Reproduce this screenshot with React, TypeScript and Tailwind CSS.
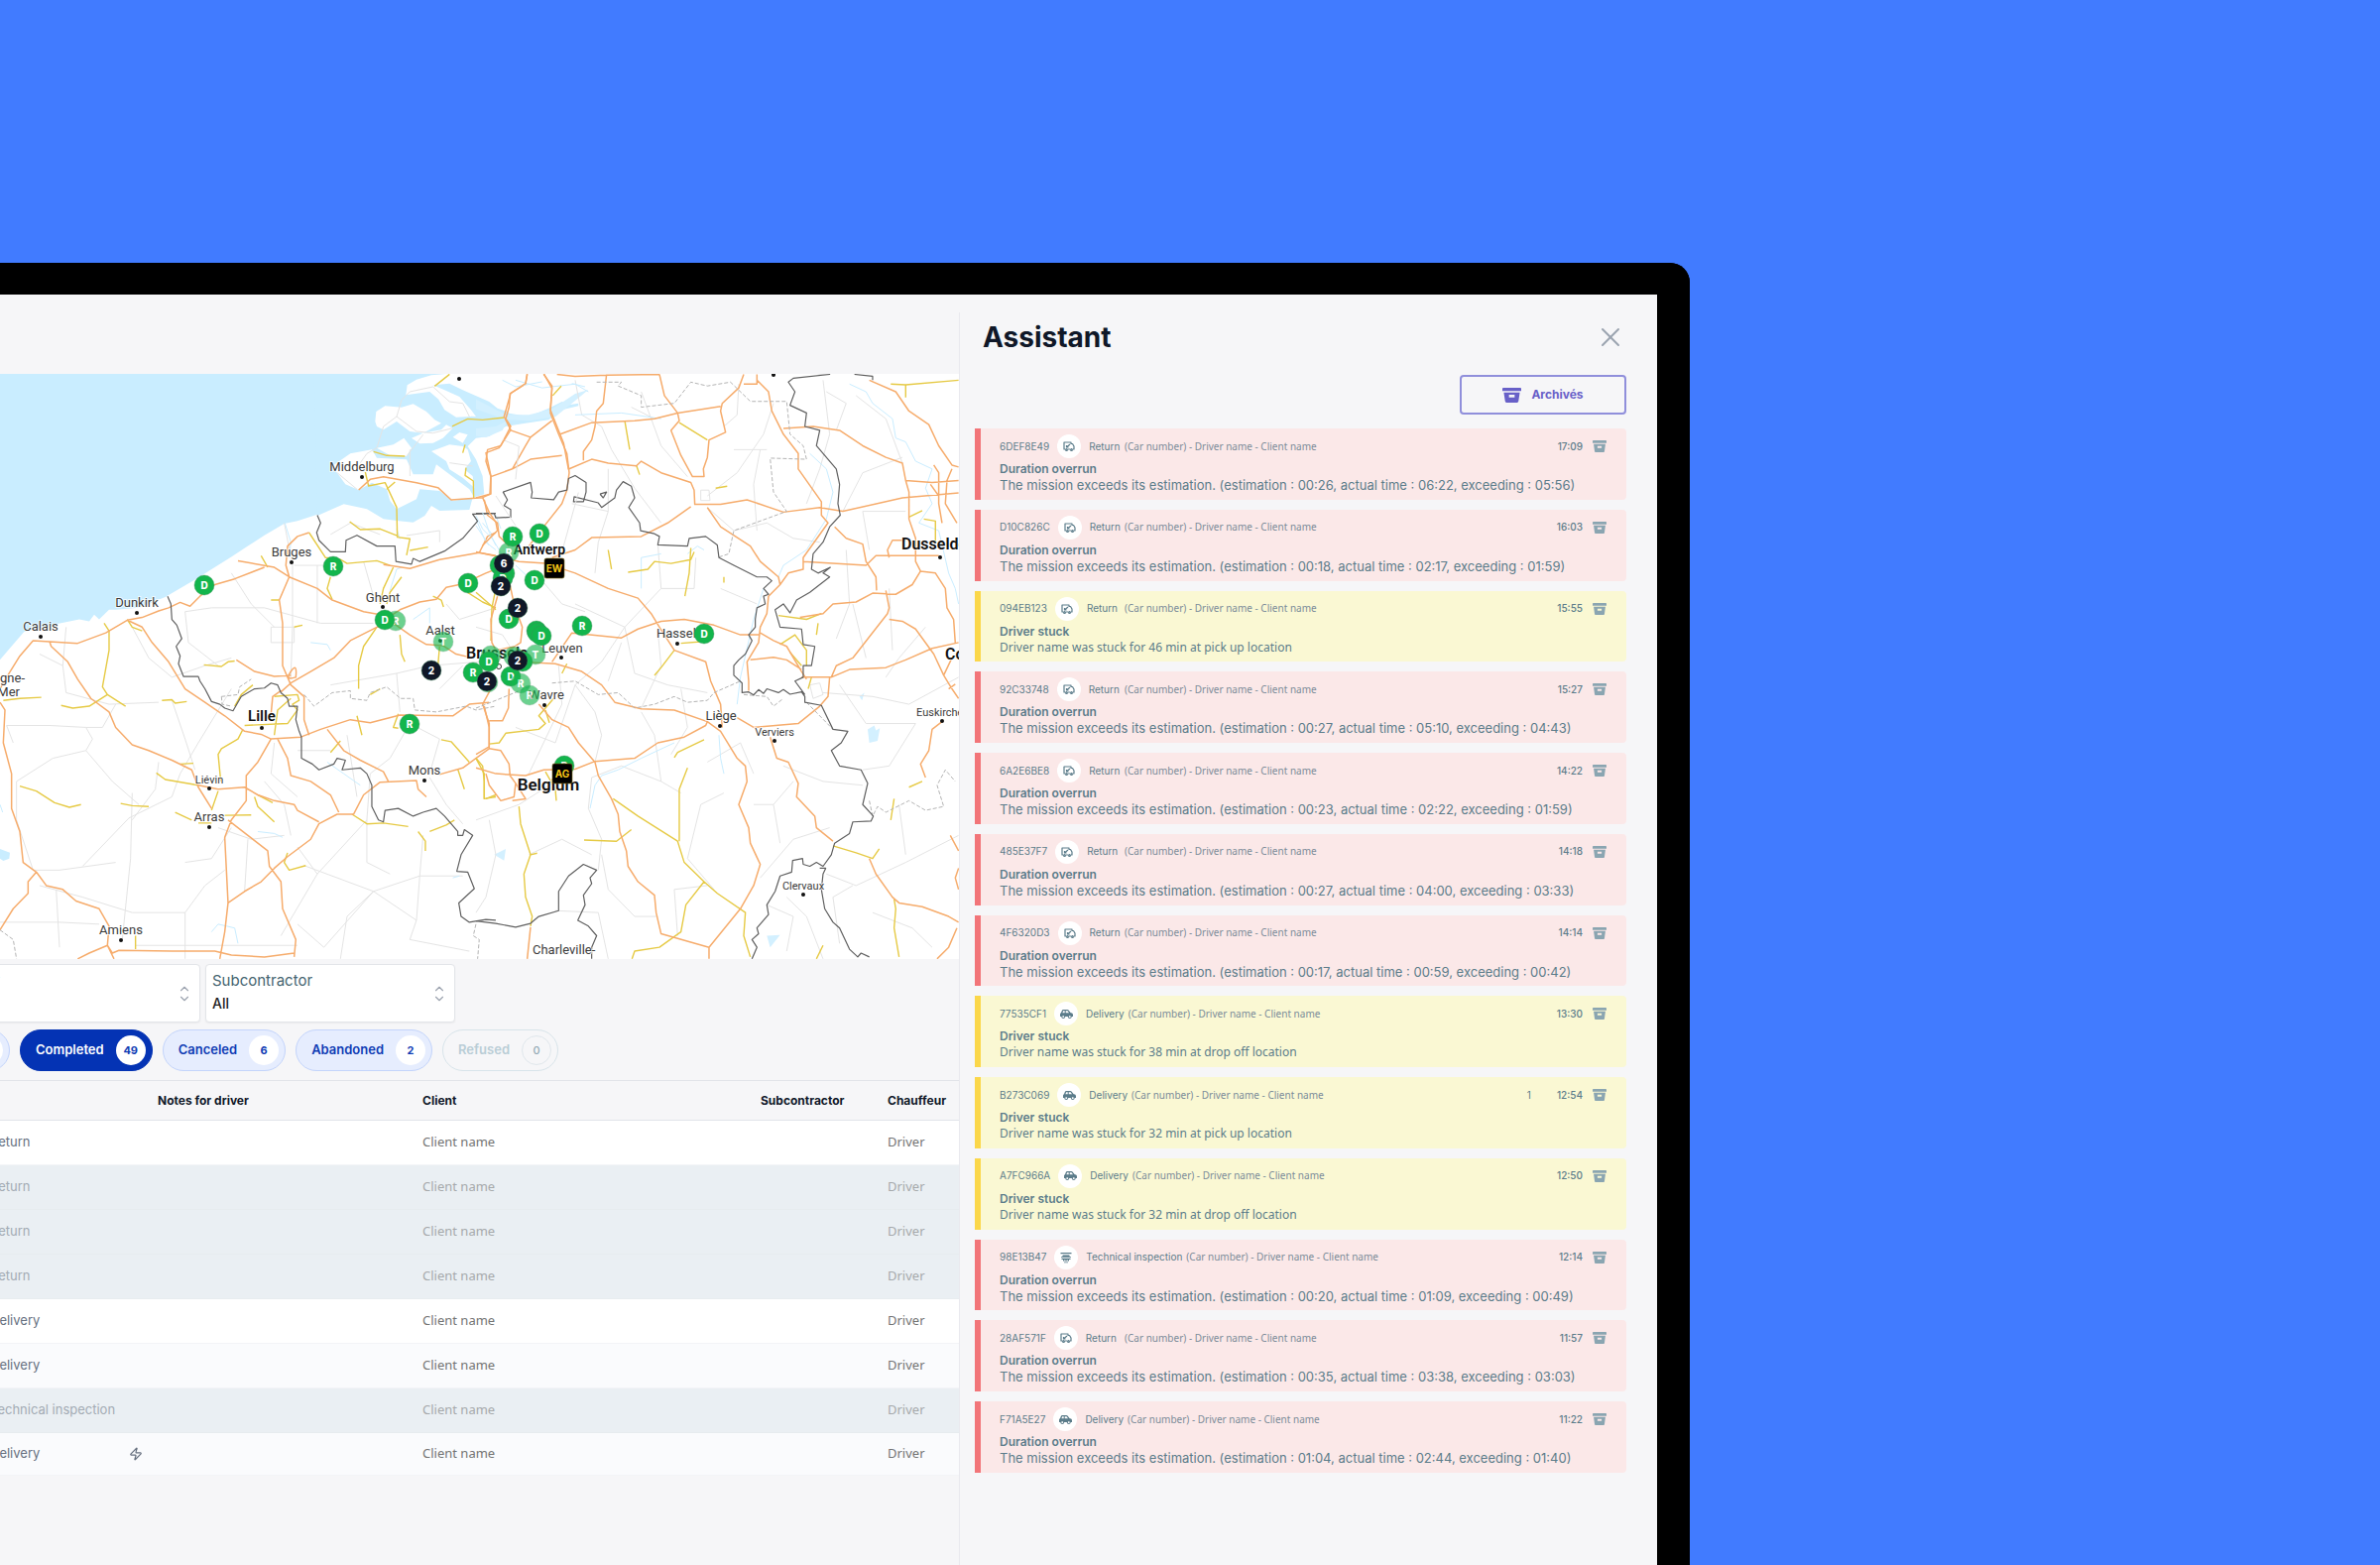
import { useState } from "react";
import clsx from "clsx";
import { FaCarSide } from "react-icons/fa";
import { LuChevronDown, LuChevronUp, LuX, LuZap } from "react-icons/lu";

type Mission = "Return" | "Delivery" | "Technical inspection";

type Alert = {
  id: string;
  mission: Mission;
  time: string;
  kind: "overrun" | "stuck";
  message: string;
  count?: number;
};

const overrun = (estimation: string, actual: string, exceeding: string) =>
  `The mission exceeds its estimation. (estimation : ${estimation}, actual time : ${actual}, exceeding : ${exceeding})`;

const alerts: Alert[] = [
  { id: "6DEF8E49", mission: "Return", time: "17:09", kind: "overrun", message: overrun("00:26", "06:22", "05:56") },
  { id: "D10C826C", mission: "Return", time: "16:03", kind: "overrun", message: overrun("00:18", "02:17", "01:59") },
  { id: "094EB123", mission: "Return", time: "15:55", kind: "stuck", message: "Driver name was stuck for 46 min at pick up location" },
  { id: "92C33748", mission: "Return", time: "15:27", kind: "overrun", message: overrun("00:27", "05:10", "04:43") },
  { id: "6A2E6BE8", mission: "Return", time: "14:22", kind: "overrun", message: overrun("00:23", "02:22", "01:59") },
  { id: "485E37F7", mission: "Return", time: "14:18", kind: "overrun", message: overrun("00:27", "04:00", "03:33") },
  { id: "4F6320D3", mission: "Return", time: "14:14", kind: "overrun", message: overrun("00:17", "00:59", "00:42") },
  { id: "77535CF1", mission: "Delivery", time: "13:30", kind: "stuck", message: "Driver name was stuck for 38 min at drop off location" },
  { id: "B273C069", mission: "Delivery", time: "12:54", kind: "stuck", message: "Driver name was stuck for 32 min at pick up location", count: 1 },
  { id: "A7FC966A", mission: "Delivery", time: "12:50", kind: "stuck", message: "Driver name was stuck for 32 min at drop off location" },
  { id: "98E13B47", mission: "Technical inspection", time: "12:14", kind: "overrun", message: overrun("00:20", "01:09", "00:49") },
  { id: "28AF571F", mission: "Return", time: "11:57", kind: "overrun", message: overrun("00:35", "03:38", "03:03") },
  { id: "F71A5E27", mission: "Delivery", time: "11:22", kind: "overrun", message: overrun("01:04", "02:44", "01:40") },
];

const rows: { mission: Mission; muted?: boolean; tinted?: boolean; express?: boolean }[] = [
  { mission: "Return" },
  { mission: "Return", muted: true },
  { mission: "Return", muted: true },
  { mission: "Return", muted: true },
  { mission: "Delivery" },
  { mission: "Delivery", tinted: true },
  { mission: "Technical inspection", muted: true },
  { mission: "Delivery", tinted: true, express: true },
];

const filters = [
  { label: "Completed", count: 49 },
  { label: "Canceled", count: 6 },
  { label: "Abandoned", count: 2 },
  { label: "Refused", count: 0 },
];

// x, baseline, name, size, weight, anchor
type City = [number, number, string, number, number, "start" | "middle" | "end"];
const cities: City[] = [
  [365, 98, "Middelburg", 13, 400, "middle"],
  [294, 184, "Bruges", 13, 400, "middle"],
  [138, 235, "Dunkirk", 13, 400, "middle"],
  [41, 259, "Calais", 13, 400, "middle"],
  [25, 311, "gne-", 13, 400, "end"],
  [20, 325, "Mer", 13, 400, "end"],
  [264, 350, "Lille", 15, 600, "middle"],
  [386, 230, "Ghent", 13, 400, "middle"],
  [444, 263, "Aalst", 13, 400, "middle"],
  [470, 287, "Brussels", 16, 600, "start"],
  [211, 413, "Liévin", 11, 400, "middle"],
  [211, 451, "Arras", 13, 400, "middle"],
  [122, 565, "Amiens", 13, 400, "middle"],
  [428, 404, "Mons", 13, 400, "middle"],
  [544, 182, "Antwerp", 14, 600, "middle"],
  [567, 281, "Leuven", 13, 400, "middle"],
  [662, 266, "Hasselt", 13, 400, "start"],
  [551, 328, "Wavre", 13, 400, "middle"],
  [727, 349, "Liège", 13, 400, "middle"],
  [781, 365, "Verviers", 11, 400, "middle"],
  [553, 420, "Belgium", 17, 600, "middle"],
  [810, 520, "Clervaux", 11, 400, "middle"],
  [537, 585, "Charleville-", 13, 400, "start"],
  [909, 177, "Dusseldorf", 16, 600, "start"],
  [953, 288, "Cologne", 16, 600, "start"],
  [924, 345, "Euskirchen", 11, 400, "start"],
];

const dots = [
  [365, 104], [294, 190], [138, 241], [41, 265], [264, 357], [386, 235], [444, 269], [211, 418],
  [211, 457], [122, 571], [428, 410], [566, 286], [683, 272], [549, 334], [726, 355], [781, 370],
  [810, 525], [948, 185], [950, 350], [463, 5], [780, 1],
];

type Pin = [number, number, string, ("green" | "faded" | "dark" | "tag")?];
const pins: Pin[] = [
  [206, 213, "D"],
  [336, 194, "R"],
  [399, 249, "R", "faded"],
  [388, 248, "D"],
  [413, 353, "R"],
  [447, 270, "T", "faded"],
  [435, 299, "2", "dark"],
  [472, 211, "D"],
  [513, 180, "R", "faded"],
  [504, 193, "S"],
  [509, 201, ""],
  [507, 206, "D"],
  [508, 191, "6", "dark"],
  [505, 214, "2", "dark"],
  [517, 164, "R"],
  [544, 161, "D"],
  [539, 208, "D"],
  [513, 247, "D"],
  [522, 236, "2", "dark"],
  [541, 259, ""],
  [542, 261, ""],
  [546, 264, "D"],
  [587, 254, "R"],
  [540, 283, "T", "faded"],
  [495, 284, "", "faded"],
  [477, 301, "R"],
  [493, 290, "D"],
  [492, 311, "", "faded"],
  [491, 310, "2", "dark"],
  [515, 305, "D"],
  [518, 285, "", "faded"],
  [527, 290, ""],
  [522, 289, "2", "dark"],
  [525, 312, "R", "faded"],
  [534, 324, "R", "faded"],
  [710, 262, "D"],
  [569, 395, "D"],
  [559, 196, "EW", "tag"],
  [567, 403, "AG", "tag"],
];

const west = {
  minor:
    "M860 430L885 540 885 700 880 830M50 1100L50 1200 100 1330 180 1330 350 1310M400 1130L395 1300 370 1510M250 1320L390 1195 520 1140 545 1080 600 1000 700 860M120 1370L250 1400 400 1440 560 1440 620 1370 680 1330M120 770L190 800 200 870 330 900 480 895M20 955L150 955 260 960 280 990 260 1020 340 1100 420 1160M400 700L450 780 520 830 620 800 700 780M640 650L800 650 970 690 1130 690M890 540L1000 540M660 1220L760 1250 860 1240M850 1500L960 1340 1110 1200 1120 1080M920 1318L1130 1385 1270 1345 1400 1345M1130 1385L980 1530 900 1470M1130 1385L1260 1460 1240 1510 1420 1540M1280 1240L1270 1345 1260 1460M1110 1200L1110 1310 1180 1340M1000 850L1200 820 1300 800 1450 790M1240 950L1180 1040 1120 1080M1240 950L1330 990 1300 1080M830 1000L820 1080 900 1140M0 1465L180 1465 300 1470M170 1380L180 1530M410 1525L900 1525M520 890L560 990 590 1070M1000 460L1060 430 1150 460M1350 640L1390 680 1500 650M820 700L890 700 890 740 820 740 820 700M1100 530L1130 620M50 1100L160 1040 260 1020M480 1050L470 1120 400 1200M700 1220L640 1300 560 1310M880 1240L860 1160 800 1100M1050 980L1080 1140M1300 1090L1350 1160 1400 1210M350 900L310 960 260 960M560 660L570 740 660 800M760 640L830 700M960 540L960 690M1200 820L1210 920M1330 860L1400 800M900 1020L1000 1020M700 560L760 640M560 660L640 650M200 700L190 800M40 1000L20 955M560 1440L560 1560M750 1250L740 1385M1130 1385L1050 1450 1030 1560M960 1340L900 1270",
  motorway:
    "M0 860L20 830 60 775 100 735 150 738 235 742 320 715 385 682 430 675 480 658 510 650 545 636 575 646 605 620 650 590 710 575 800 545M720 528L830 545 875 570 960 600 1005 630 1100 660 1180 672 1210 655 1270 635 1320 628 1350 597 1400 588 1470 560 1500 550M150 738L155 750 205 790 235 835 275 885 330 920 350 960 400 1005 450 1020 520 1045 580 1070 600 1115 640 1170M385 682L430 700 460 740 510 790 560 860 620 895 680 930 740 970 790 978 820 990 910 985 970 965 1060 940 1120 948 1210 928 1370 930 1420 900 1480 895M935 455L900 465 870 490 865 540 875 570 845 630 855 690 855 800 880 850 920 880 920 940 935 980M715 785L770 815 830 828 880 825M880 815Q900 790 895 830Q860 840 880 815M850 868L880 845 940 815 1010 780 1060 735 1140 700 1190 690 1240 720 1290 745 1340 748 1380 770 1420 778M820 990L780 1050 745 1085 745 1150 700 1200 680 1245 685 1330 690 1415 680 1490 665 1560M690 1200L750 1240 810 1280 815 1320 850 1360 855 1430 895 1510 890 1555M690 1415L740 1385 790 1360 830 1325 870 1295 940 1250 965 1210 1020 1185 1070 1185 1100 1135 1150 1102 1260 1098 1265 1120 1290 1140M840 990L870 1040 880 1085 940 1100 1000 1135 1025 1180M990 965L1040 1020 1090 1045 1160 1075 1175 1100M1330 1082L1400 1065 1480 1015 1480 960 1465 905M660 1120L740 1115 780 1135 830 1150 890 1160 900 1175 965 1205M0 895L15 915 10 1000 35 1080 35 1170 60 1230 70 1310 110 1335 140 1370 190 1380 230 1410 300 1430 330 1475 325 1525 345 1560M110 1335L85 1360 85 1390 40 1430 0 1485M235 1560L270 1545 325 1525 340 1545 360 1538 520 1540 650 1540 700 1550 800 1555 890 1545M1160 538L1240 548 1330 525 1450 507 1500 515M1450 507L1475 465 1500 455M820 925L825 880 850 865M600 1110L660 1120",
  trunk:
    "M1215 570L1180 610 1170 640M935 455L985 520 1030 525 1050 535 1140 528 1180 540M1000 570L990 600 1005 628M1190 545L1160 600 1150 640M1140 700L1100 750 1085 800 1085 860M1210 720L1215 770 1225 790M1330 750L1325 800M1415 610L1460 635 1500 650M1310 620L1335 630 1342 648M315 690L330 710 330 760 310 855 325 875 380 905M325 875L270 905 220 910 185 903M385 680L400 700 430 710M10 890L60 885 125 882M490 890L520 888 530 897 565 893M617 798L670 802 690 790 710 788M735 965L720 990 670 1015 660 1030 668 1100M660 1125L640 1175M473 1078L500 1095 600 1110M60 1112L110 1125 165 1155 210 1167 245 1160M365 1157L400 1163 450 1165M530 1180L580 1200M770 1140L780 1165 830 1205M780 1135L825 1155M1065 1185L1110 1210 1160 1208 1235 1217M1300 1230L1350 1213 1375 1200M1265 1230L1287 1255 1287 1280M870 1285L860 1310 875 1330 925 1318M1335 992L1365 997 1420 1050M1385 1068L1405 1120M1440 1040L1465 1080 1465 1145 1500 1140M410 1500L410 1535M1080 930L1095 980M1000 1025L1030 995M1205 925L1190 960 1205 962M830 880L900 875 905 890 885 900 900 915 870 950 740 955M830 980L840 915 880 885M640 1208L600 1208M545 1055L585 1053M790 515L810 545M820 630L845 630M890 700L915 695M680 1188L760 1187M710 905L730 875 765 850M1120 875L1150 860",
  border:
    "M507 620L517 640 520 680 535 695 550 730 533 750 545 775 540 795 555 828 600 828 605 840 620 860 640 893 665 900 680 910 705 917 730 880 770 860 800 858 820 845 840 850 850 870 870 885 875 905 900 905 895 940 905 970 912 985 912 1040 945 1055 965 1070 1010 1055 1020 1040 1045 1045 1035 1070 1090 1065 1110 1080 1125 1110 1125 1165 1145 1200 1160 1205 1165 1175 1205 1170 1250 1190 1280 1180 1320 1170 1345 1190 1385 1230 1385 1240 1400 1240 1405 1225 1430 1240 1395 1290 1382 1333 1415 1335 1435 1378 1388 1415 1395 1450 1420 1465 1470 1458 1500 1460M960 410L970 430 958 455 965 475 1000 505 1045 505 1047 475 1080 462 1140 490 1195 490 1198 530 1245 537 1250 522 1270 530 1345 503 1400 470 1445 425 1430 407 1500 405",
  region:
    "M670 880L672 900 700 905M670 880L720 875 725 855 760 835M920 875L950 905 1005 870 1060 865 1060 885 1110 890 1120 870 1170 855 1205 880 1210 885 1250 885 1255 915 1320 920 1410 905 1440 915 1500 905M0 1485L40 1510 50 1560M1440 1470L1432 1500 1450 1510 1445 1560",
  water:
    "M860 425L880 480 875 520M1180 605L1200 550 1215 545M940 740L990 745 1000 760M1250 680L1300 650 1300 690M990 1050L1040 1080 1090 1110M780 1230L830 1235 855 1245M640 1490L660 1470 710 1480 720 1520M0 1160L8 1180M1370 1350L1390 1345M1440 420L1470 480 1500 500M1460 430L1490 460",
};

const east = {
  minor:
    "M300 60L320 150 380 180 410 240M400 290L400 400 370 480 360 560M290 380L400 400M500 90L560 230 640 310M680 345L705 345 708 372 680 372 680 345M795 70L790 150 750 180M700 360L790 300 870 200 900 120M1000 380L1040 290 1070 200 1050 60M1110 400L1170 300 1290 260M1090 190L1120 120 1060 90M450 700L380 790 300 850 240 1000M450 700L560 600 550 480M560 600L660 600 665 520M300 640L450 700 480 820 580 850 700 870M300 850L360 920 380 980 360 1050M240 1000L180 980 120 960M500 920L540 980 560 1100 620 1130M700 1050L800 1000 840 1080M840 1160L900 1160 920 1260M560 1100L440 1060 350 1090 340 1170 380 1250 370 1330M160 1290L260 1250 350 1290M380 1290L400 1380 480 1450 550 1450M0 1200L130 1160 240 1100M720 1380L640 1300 680 1160 750 1130M860 1350L960 1250 1070 1220M1060 1340L1150 1370 1300 1310 1460 1240M1100 1520L1080 1400 1140 1370M940 1400L1000 1450 1050 1560M1090 730L1130 640 1120 500M1050 870L1200 880 1310 900 1460 830M1100 850L1180 950 1330 950 1250 1060 1170 1070M1360 700L1280 780 1240 830M1140 640L1180 780M1010 850L1040 845 1050 875 1020 885 1010 850M1250 600L1260 760M880 430L960 470 1040 480M1170 400L1190 500M780 240L880 240M470 130L540 160M250 800L260 900 160 1080M0 700L80 720 110 760M180 560L260 640 330 660M60 1290L30 1400 0 1440M240 1435L370 1440 400 1560M610 1500L600 1380 700 1370M880 1420L960 1450 940 1540M1200 1440L1320 1480 1380 1530M1280 1160L1300 1290M930 1060L1050 1100 1170 1110M620 860L640 960 590 1030M860 240L840 330 850 450M550 710L560 800 500 910M740 600L850 640M700 390L780 450 880 430M1300 400L1170 400M560 430L480 340 410 240M1150 100L1240 160 1290 275M40 1200L60 1290M440 740L400 840M960 1100L900 1160",
  motorway:
    "M155 45L150 70 103 95 100 130 90 160 105 180 75 230 35 240 30 270 45 310 45 355 0 365M25 370L35 410 65 430 70 465 100 490M105 190L165 208 230 165M45 310L110 290 165 265 260 255M165 208L150 230 110 290M205 45L230 75 225 145 250 200 275 250 282 300 275 345 260 380 200 445 160 490M395 45L385 120 365 140 360 180 350 215 325 245 325 268M245 45L300 50 395 47 555 45M255 200L350 170 480 165 540 160 610 145 740 128M282 290L350 265 400 275 485 282 500 270 560 300 650 325 660 345 662 382 740 382 820 370 930 402 1040 390 1110 400 1290 365 1460 352M555 45L570 100 610 145 615 165 590 190 620 255 655 310 690 310 688 290 700 260 705 215 755 195 740 140 745 120 795 80 810 45M810 70L850 70 850 45M850 60L885 90 895 140 930 200 975 250 975 290 1045 375 1045 410 1065 430 990 520 990 550 945 560 920 590 885 620 880 665 860 700 855 740 820 790 825 840 825 865M930 185L1020 180 1100 190 1170 230 1240 260 1290 275 1300 320 1310 350 1310 420 1330 470 1330 530 1345 555 1320 590 1270 615 1200 612 1150 635 1080 640 1050 665 980 675M1190 60L1270 90 1310 140 1370 175 1400 230 1440 280 1460 285M1300 320L1380 325 1460 320M1385 280L1400 300 1400 380 1410 430M1440 290L1425 320 1420 380 1455 430M1375 330L1400 360M990 530L1180 540 1210 515 1330 515 1400 515M1250 520L1245 500 1260 475 1300 475M1085 440L1120 470 1170 485 1180 530 1210 570 1212 605M1345 555L1390 560 1420 600 1425 650 1445 680 1450 740M1240 605L1250 650 1245 665 1195 720 1140 780 1090 800 1075 830 985 830M1250 680L1290 685 1330 705 1385 770 1415 825 1440 860 1460 885M1415 825L1440 780M1430 860L1450 848M1075 830L1130 810 1240 805 1300 785 1380 755 1460 740M830 785L900 778 940 785 985 810M860 715L900 735 940 750 985 815 1000 835M230 520L300 500 350 468 500 465 580 430 650 388M700 390L740 440 830 490 860 530 915 570 920 590M0 505L80 520 130 530 210 535 300 560 400 600 490 625 530 665 555 700 600 760 695 790 710 840 740 900 745 960M230 790L290 715 345 720 440 728 490 705 560 685 630 680 720 695 800 720 860 720M65 560L100 580 115 640 140 700 135 740 100 760M65 620L45 680 48 740 60 760 120 750M130 790L240 795 320 815 380 850 420 895 500 912 600 915 700 945 740 970 790 1040 815 1060 820 1100 795 1160 825 1220 830 1260 860 1315 840 1370 800 1430 705 1530 705 1560M190 900L210 920 230 940 280 960 310 1000 360 1050 370 1085 410 1145 430 1185 435 1230 455 1280 460 1320 490 1360 540 1395 545 1440 560 1495 705 1530M0 1065L60 1080 150 1085 205 1070 300 1068 360 1048 480 1040 550 1000 630 985 695 955 700 945M45 860L20 900 40 950 40 1010 0 1030M40 1015L75 1020 100 1055 103 1085 120 1105 115 1140 75 1150 40 1110 30 1080M40 943L80 943 98 910 100 860M120 1105L150 1145 110 1150M790 935L840 960 975 950 1040 905 1065 880 1070 830M890 985L910 1040 945 1050 975 1105 970 1140 1025 1190 1030 1220 1080 1255M165 1478L155 1560M1190 1300L1210 1340 1260 1400 1280 1415 1350 1425 1430 1450 1460 1465M1455 1480L1430 1530 1395 1560M1410 945L1380 965 1370 1020 1345 1055 1360 1090M1435 1240L1460 1280M1460 1325L1450 1350 1460 1380",
  trunk:
    "M232 100L258 75M450 165L465 240M615 170L700 215M485 280L495 305M400 500L410 550M460 558L520 550 540 530 590 535 650 525 660 505M650 495L645 560 632 620M725 340L760 335M620 742L690 737M600 760L560 805 540 825M0 610L60 655M120 755L160 790M260 820L275 795M235 885L190 930 210 950 190 965 90 975 70 1000 40 1003M210 915L222 948M600 1038L610 1025 690 992M0 1040L20 1060 25 1100 25 1145M60 1135L30 1145M210 1075L240 1120 243 1150M130 1165L135 1210 165 1290 145 1340 150 1400 170 1450 165 1475M640 1065L615 1120 615 1255M327 1252L425 1255 470 1225M415 1145L490 1190 610 1255 630 1310 690 1360 635 1420 620 1490 555 1530 480 1540 472 1560M690 1360L730 1390 815 1440 810 1500 830 1555M915 670L1000 680 1045 665M920 745L965 720 1000 760 1000 800M1030 720L1035 690M1005 860L1015 830M950 765L985 800M1255 70L1300 72 1460 60M1300 105L1300 70M1355 420L1390 425 1390 480M1310 415L1350 398M1080 1267L1150 1285 1200 1300 1220 1275M1265 1145L1255 1200M1265 1405L1270 1430 1265 1480 1280 1555M1310 1115L1350 1100M1030 1560L1050 1525M750 570L750 585M165 1290L185 1286M45 735L48 650 60 600",
  border:
    "M0 405L55 405 60 417 105 415 105 395 85 385 95 370 82 350 165 325 170 350 167 365 235 370 250 350 275 345 280 315 300 307 333 325 333 350 325 375 295 375 297 362 370 378 380 390 420 365 425 345 445 323 470 335 480 365 462 390 495 430 498 450 540 458 555 465 550 487 640 490 645 470 695 465 730 487 735 520 780 540 850 570 880 570 895 580 870 600 885 615 870 620 875 640 850 650 845 680 845 700 825 720 835 735 815 770 795 785 780 800 780 825 805 845 805 870 825 868 840 876 855 862 870 872 880 860 915 870 930 862 950 874 985 868 995 880 995 895 1045 903 1080 965 1125 970 1105 1000 1075 1020 1100 1060 1165 1070 1185 1105 1170 1160 1202 1190 1195 1203 1140 1205 1130 1235 1085 1260 1075 1290 1050 1320 1030 1310 1010 1320 990 1315 988 1300 958 1305 955 1335 920 1345 905 1385 880 1420 885 1445 850 1480 855 1495 835 1510 850 1530 835 1560M1040 1325L1058 1325 1050 1340 1045 1380 1055 1430 1080 1465 1100 1480 1130 1535 1155 1555 1165 1545 1190 1555M1030 42L1070 45 960 55 945 65 965 90 950 125 1000 145 995 180 1040 190 1030 230 1090 290 1100 330 1095 380 1102 410 1070 440 1050 480 1020 510 1015 550 1035 560 1072 545 1050 560 1070 570 1010 610 970 630 950 663 930 640 905 655 920 700 985 705 990 745 1025 750 1015 800 990 800 990 830 965 840 995 875M1145 45L1200 50 1200 60M375 355L395 350 385 365 375 355M0 1462L60 1468 120 1478 165 1468 190 1450 250 1435 250 1385 280 1345 325 1315 365 1330 345 1350 350 1365 325 1395 330 1420 308 1460 340 1475 365 1500 350 1530 350 1560",
  region:
    "M0 910L60 890 160 855M230 845L300 840 370 875 430 870 480 910 540 900 600 880 640 895 700 890 720 870 800 840M810 875L880 880 900 905 930 885M365 65L440 65 430 75 500 100 500 130 600 120 650 65 700 75 770 65 830 115 940 115 950 200 990 230 1000 265 890 262 900 350 940 400 780 450 765 510 730 520M1190 1150L1200 1190 1215 1165 1240 1180 1310 1150 1360 1175 1415 1165 1395 1110 1420 1070 1450 1100M1000 895L1080 965",
  water:
    "M1010 250L1060 290 1080 350 1060 420 1000 500 930 540 915 570M870 600L840 680 800 830 790 900M1300 220L1330 270 1380 290 1360 340 1380 380 1340 430 1400 450 1430 560 1450 600 1460 640M500 600L500 520 560 510M380 1085L430 1070 500 1040 600 1000M1130 70L1180 90 1200 120 1260 160 1270 210 1300 220M120 60L200 80 300 70 340 90M300 150L440 145 560 160M345 1170L360 1110 380 1085M735 980L740 1040 750 1080M640 510L670 490 690 500M60 410L75 445M120 540L170 580",
};

const delta = {
  sea: "M-10 20H400L440 45 500 75 545 105 580 140 640 150 700 125 740 105 760 115 790 110V118L740 130 700 160 620 172 570 180 520 210 480 215 455 240 480 280 500 330 505 385 470 395 460 432 370 435 345 420 325 450 290 470 240 465 200 460 150 430 80 415 0 450Z",
  islands:
    "M268 85L272 55 300 38 345 25 400 20H700L700 80 640 115 590 140 545 125 520 105 440 70 400 50 350 55 385 70 430 90 465 130 480 150 440 148 375 105 340 75 300 80ZM365 95L430 110 465 150 420 152 385 130ZM175 165L178 135 205 118 255 122 290 112 330 135 355 160 375 170 320 200 280 195 240 165 200 190 180 180ZM285 215L320 200 375 190 390 175 410 185 380 215 350 230 310 232ZM410 212L430 198 455 205 440 230ZM345 255L400 235 440 240 455 250 465 285 445 310 470 330 475 365 440 335 400 310 390 285ZM180 245L230 235 262 215 285 245 270 270 220 268ZM45 300L100 262 165 250 180 275 270 280 290 325 350 325 360 295 420 340 460 370 475 395 410 405 370 375 310 370 300 400 240 430 220 405 210 370 165 350 125 372 85 355Z",
  minor: "M130 290L150 262 180 245 200 180 240 150 255 100 280 75 350 60 400 105 440 110 460 150M240 150L300 195 350 200 410 185M270 270L320 205M280 330V250M400 290L470 300M60 320L120 370M540 390L600 480M600 340L610 240 560 220M740 560L790 380M270 510L370 495 370 530",
  motorway:
    "M125 372L160 340 200 332 300 350 365 365 405 402 500 395 522 385 525 330 510 260 550 245 585 190 565 150 585 80 630 50 635 20M500 395L520 440 540 470 545 495 500 540M685 20L710 65 705 130 745 230 760 310",
  trunk: "M145 318L155 360 205 350 240 425 242 515 280 520 270 570M98 468L130 492 190 490 245 512M280 555L335 545M210 370L235 348M170 256L210 268 265 270M355 58L400 22M408 180L455 157 500 160 565 153M440 260L447 235M450 305L447 328 472 345 473 398",
  water: "M500 440L520 500 540 540M480 450L500 490 530 520 560 570M480 480L520 540M560 40L600 60 680 45M240 490L250 520M770 50L810 60",
};

type Layer = { minor: string; motorway: string; trunk: string; water: string; border?: string; region?: string };

function Roads({ layer, transform }: { layer: Layer; transform: string }) {
  return (
    <g transform={transform} className="fill-none" strokeLinejoin="round">
      <path d={layer.minor} stroke="#e4e4e4" vectorEffect="non-scaling-stroke" />
      <path d={layer.water} stroke="#c9edff" vectorEffect="non-scaling-stroke" />
      <path d={layer.trunk} stroke="#e6ca45" strokeWidth="1.4" vectorEffect="non-scaling-stroke" />
      <path d={layer.motorway} stroke="#f6ac6c" strokeWidth="1.5" vectorEffect="non-scaling-stroke" />
      {layer.region && (
        <path d={layer.region} stroke="#b4b4b4" strokeDasharray="4 2" vectorEffect="non-scaling-stroke" />
      )}
      {layer.border && <path d={layer.border} stroke="#606060" strokeWidth="1.2" vectorEffect="non-scaling-stroke" />}
    </g>
  );
}

function MapPin({ pin }: { pin: Pin }) {
  const [x, y, label, tone = "green"] = pin;
  if (tone === "tag") {
    return (
      <g>
        <rect x={x - 10} y={y - 10} width="20" height="20" rx="2" fill="#000" stroke="#7a6410" strokeWidth="0.6" />
        <text x={x} y={y + 4} textAnchor="middle" fontSize="10" fontWeight="700" fill="#f5c518">
          {label}
        </text>
      </g>
    );
  }
  return (
    <g opacity={tone === "faded" ? 0.62 : 1}>
      <circle cx={x} cy={y} r="10" fill={tone === "dark" ? "#101828" : "#13b54c"} stroke="#3f8a5b" strokeWidth="0.4" />
      <text x={x} y={y + 4} textAnchor="middle" fontSize="10" fontWeight="800" fill="#fff">
        {label}
      </text>
    </g>
  );
}

function FleetMap() {
  const westTransform = "translate(0 -17) scale(0.3333 0.389)";
  const eastTransform = "translate(480 -17) scale(0.3333 0.389)";
  const deltaTransform = "translate(320 -7) scale(0.3333)";
  return (
    <svg
      viewBox="0 0 967 590"
      preserveAspectRatio="xMinYMin slice"
      className="block h-[590px] w-full bg-white"
      role="img"
      aria-label="Fleet map"
    >
      <path
        fill="#c9edff"
        transform={westTransform}
        d="M0 42H1240V60L1000 300 960 408 900 425 860 432 800 462 750 490 700 518 640 550 600 572 550 597 500 622 420 650 350 655 330 655 300 680 285 668 270 685 240 680 170 692 73 712 45 740 0 785ZM0 1275L30 1285 28 1300 10 1306 0 1300Z"
      />
      <g transform={deltaTransform}>
        <path d={delta.sea} fill="#c9edff" />
        <path d={delta.islands} fill="#fff" />
      </g>
      <path
        transform={eastTransform}
        fill="#d3f0ff"
        d="M0 110L90 150 160 150 230 135 300 95 340 85 290 120 240 155 160 165 90 162 0 135ZM0 185L60 180 95 165 80 190 30 208 0 205ZM1185 965L1205 955 1210 968 1222 962 1215 995 1190 1000ZM55 1290L90 1275 85 1305ZM880 1500L920 1498 890 1530ZM1160 880L1175 870 1168 890Z"
      />
      <Roads layer={west} transform={westTransform} />
      <Roads layer={east} transform={eastTransform} />
      <Roads layer={delta} transform={deltaTransform} />
      {dots.map(([x, y]) => (
        <circle key={`${x}-${y}`} cx={x} cy={y} r="2" fill="#111" />
      ))}
      <circle cx="503" cy="295" r="2.500" fill="#fff" stroke="#333" />
      <g className="font-[Roboto,sans-serif]" stroke="#fff" strokeWidth="2" strokeOpacity="0.7" paintOrder="stroke">
        {cities.map(([x, y, name, size, weight, anchor]) => (
          <text key={name} x={x} y={y} fontSize={size} fontWeight={weight} textAnchor={anchor} fill={weight === 600 ? "#111" : "#3c3c3c"}>
            {name}
          </text>
        ))}
      </g>
      {pins.map((pin) => (
        <MapPin key={`${pin[0]}-${pin[1]}`} pin={pin} />
      ))}
    </svg>
  );
}

function ArchiveIcon({ className }: { className?: string }) {
  return (
    <svg viewBox="0 0 20 16" preserveAspectRatio="none" fill="currentColor" className={className} aria-hidden="true">
      <path d="M0 .8C0 .3.4 0 .8 0h18.400c.4 0 .8.3.8.8v2.700H0z" />
      <path fillRule="evenodd" d="M1.500 5h17l-1.400 9.500c-.1.900-.7 1.500-1.600 1.500h-11c-.9 0-1.500-.6-1.600-1.500zM7 7.500v2.800h6V7.500z" />
    </svg>
  );
}

function MissionIcon({ mission }: { mission: Mission }) {
  if (mission === "Delivery") return <FaCarSide className="size-[13px]" />;
  if (mission === "Return") {
    return (
      <svg viewBox="0 0 24 20" className="h-2.5 w-3" fill="none" stroke="currentColor" strokeWidth="2.400" strokeLinejoin="round">
        <path d="M4 16H2V2h14v3h3l3 5v6h-2M10 16h4M7 12l7-6M7 8v4h4" />
        <circle cx="7" cy="17" r="1.800" />
        <circle cx="17" cy="17" r="1.800" />
      </svg>
    );
  }
  return (
    <svg viewBox="0 0 24 24" className="size-3" fill="currentColor">
      <path d="M1 2h22v2.500H1zM6 7h12l2 3h2v1.500H2V10h2zM3 13.500h18V16h-3v3h-3v-3h-1.500v3h-3v-3H9v3H6v-3H3zM8 21h8v1.500H8z" />
    </svg>
  );
}

function AlertCard({ alert }: { alert: Alert }) {
  const stuck = alert.kind === "stuck";
  return (
    <li
      className={clsx(
        "rounded-r border-l-[6px] pt-1.5 pr-5 pl-[19px] text-[#5b7c8a]",
        stuck ? "border-[#fbd74a] bg-[#faf8d3]" : "border-[#f27579] bg-[#fbe8e8]",
      )}
    >
      <div className="flex h-6 items-center text-[10px]">
        <div className="flex min-w-[126px] items-center pr-1">
          <span>{alert.id}</span>
          <span className="mx-2 flex size-6 shrink-0 items-center justify-center rounded-full bg-white">
            <MissionIcon mission={alert.mission} />
          </span>
          <span>{alert.mission}</span>
        </div>
        <span className="font-['Noto_Sans',sans-serif] text-[10px] text-[#7b8c99]">
          (Car number) - Driver name - Client name
        </span>
        {alert.count && <span className="ml-auto pr-[26px]">{alert.count}</span>}
        <time className={clsx("font-medium", !alert.count && "ml-auto")}>{alert.time}</time>
        <button type="button" aria-label={`Archive ${alert.id}`} className="ml-2.5 text-[#8aa5b1]">
          <ArchiveIcon className="block h-3 w-3.5" />
        </button>
      </div>
      <h2 className="mt-[3px] text-xs leading-4 font-semibold">{stuck ? "Driver stuck" : "Duration overrun"}</h2>
      <p className={clsx("leading-4", stuck ? "font-['Noto_Sans',sans-serif] text-xs" : "text-[13px]")}>{alert.message}</p>
    </li>
  );
}

function Assistant() {
  return (
    <aside className="w-[704px] shrink-0 pt-[18px]">
      <div className="h-full border-l border-[#e9e9ee] pt-1 pr-[31px] pl-[15px]">
        <div className="flex h-[42px] items-center justify-between pl-2">
          <h1 className="text-[28px] font-bold text-[#101828]">Assistant</h1>
          <button type="button" aria-label="Close" className="text-[#9aa3af]">
            <LuX className="size-8" strokeWidth={1.5} />
          </button>
        </div>
        <div className="mt-[17px] flex justify-end">
          <button
            type="button"
            className="flex h-10 w-[168px] items-center justify-center gap-2.5 rounded border-2 border-[#908fdb] text-xs font-bold text-[#6860c8]"
          >
            <ArchiveIcon className="h-[15px] w-[19px]" />
            Archivés
          </button>
        </div>
        <ul className="mt-3.5 grid h-[1053px] auto-rows-fr gap-2.5">
          {alerts.map((alert) => (
            <AlertCard key={alert.id} alert={alert} />
          ))}
        </ul>
      </div>
    </aside>
  );
}

function SelectField({ id, label, value, className }: { id: string; label: string; value: string; className?: string }) {
  return (
    <div className={clsx("relative h-[59px] w-[252px] rounded border border-[#e3e5e9] bg-white px-1.5 shadow-xs", className)}>
      <label htmlFor={id} className="block pt-1.5 text-[15px] leading-5 text-[#456470]">
        {label}
      </label>
      <select id={id} className="block w-full appearance-none pt-[3px] text-sm font-medium text-[#222]">
        <option>{value}</option>
      </select>
      <span className="pointer-events-none absolute inset-y-0 right-2 flex flex-col items-center justify-center text-[#9ca3af]">
        <LuChevronUp className="-mb-1 size-3.5" />
        <LuChevronDown className="size-3.5" />
      </span>
    </div>
  );
}

function StatusPill({ label, count, active, onClick }: { label: string; count: number; active: boolean; onClick: () => void }) {
  const empty = count === 0;
  return (
    <button
      type="button"
      disabled={empty}
      onClick={onClick}
      className={clsx(
        "flex h-[42px] shrink-0 items-center gap-3 rounded-full border pr-1.5 pl-[15px] text-[13px] font-semibold",
        active && "border-[#0433b4] bg-[#0433b4] text-white",
        !active && !empty && "border-[#c3d4fb] bg-[#e6edfe] text-[#0f3cb4]",
        empty && "border-[#d8e4ea] text-[#b9cdd6]",
      )}
    >
      {label}
      <span
        className={clsx(
          "flex size-[30px] items-center justify-center rounded-full text-[11px]",
          empty ? "border border-[#e0e7ec] font-medium text-[#92a9b5]" : "bg-white font-bold text-[#0f3cb4]",
        )}
      >
        {count}
      </span>
    </button>
  );
}

function MissionTable() {
  return (
    <table className="-ml-2.5 w-[977px] table-fixed border-collapse text-left text-[13px]">
      <colgroup>
        <col className="w-[169px]" />
        <col className="w-[267px]" />
        <col className="w-[341px]" />
        <col className="w-[128px]" />
        <col />
      </colgroup>
      <thead>
        <tr className="h-10 border-y border-[#e1e4e9] text-xs font-bold text-[#101828]">
          <th>
            <span className="sr-only">Mission</span>
          </th>
          <th>Notes for driver</th>
          <th>Client</th>
          <th>Subcontractor</th>
          <th>Chauffeur</th>
        </tr>
      </thead>
      <tbody>
        {rows.map((row, i) => (
          <tr
            key={i}
            className={clsx(
              "h-[45px] border-b last:h-[43px]",
              row.muted && "border-[#e7ecef] bg-[#eaeff3] text-[#a3abb3]",
              !row.muted && "border-[#f3f4f7] text-[#66707f]",
              !row.muted && (row.tinted ? "bg-[#fafbfd]" : "bg-white"),
            )}
          >
            <td colSpan={row.express ? 1 : 2}>
              <span className="flex items-center">
                <span className={clsx(row.express && "w-[140px]")}>{row.mission}</span>
                {row.express && <LuZap className="size-3.5 shrink-0" />}
              </span>
            </td>
            {row.express && <td />}
            <td className={clsx("font-['Noto_Sans',sans-serif]", row.muted ? "text-[#a6a9ab]" : "text-[#747474]")}>Client name</td>
            <td />
            <td className={clsx("font-['Noto_Sans',sans-serif]", row.muted ? "text-[#a6a9ab]" : "text-[#747474]")}>Driver</td>
          </tr>
        ))}
      </tbody>
    </table>
  );
}

export default function App() {
  const [status, setStatus] = useState("Completed");

  return (
    <main className="flex min-h-screen flex-col bg-[#417bff] pt-[265px] font-[Inter,sans-serif]">
      <div className="flex w-[71%] grow rounded-tr-[20px] border-t-[32px] border-r-[33px] border-black bg-[#f6f6f8]">
        <section className="min-w-0 flex-1 overflow-hidden pt-20">
          <FleetMap />
          <div className="mt-[5px] -ml-[50px] flex gap-[5px]">
            <SelectField id="driver" label="Driver" value="All" />
            <SelectField id="subcontractor" label="Subcontractor" value="All" />
          </div>
          <div className="mt-[7px] mb-[9px] -ml-[130px] flex gap-2.5">
            <span className="flex h-[42px] w-[140px] shrink-0 items-center justify-end rounded-full border border-[#c3d4fb] bg-[#e6edfe] pr-1.5">
              <span className="size-[30px] rounded-full bg-white" />
            </span>
            {filters.map((filter) => (
              <StatusPill
                key={filter.label}
                label={filter.label}
                count={filter.count}
                active={status === filter.label}
                onClick={() => setStatus(filter.label)}
              />
            ))}
          </div>
          <MissionTable />
        </section>
        <Assistant />
      </div>
    </main>
  );
}
